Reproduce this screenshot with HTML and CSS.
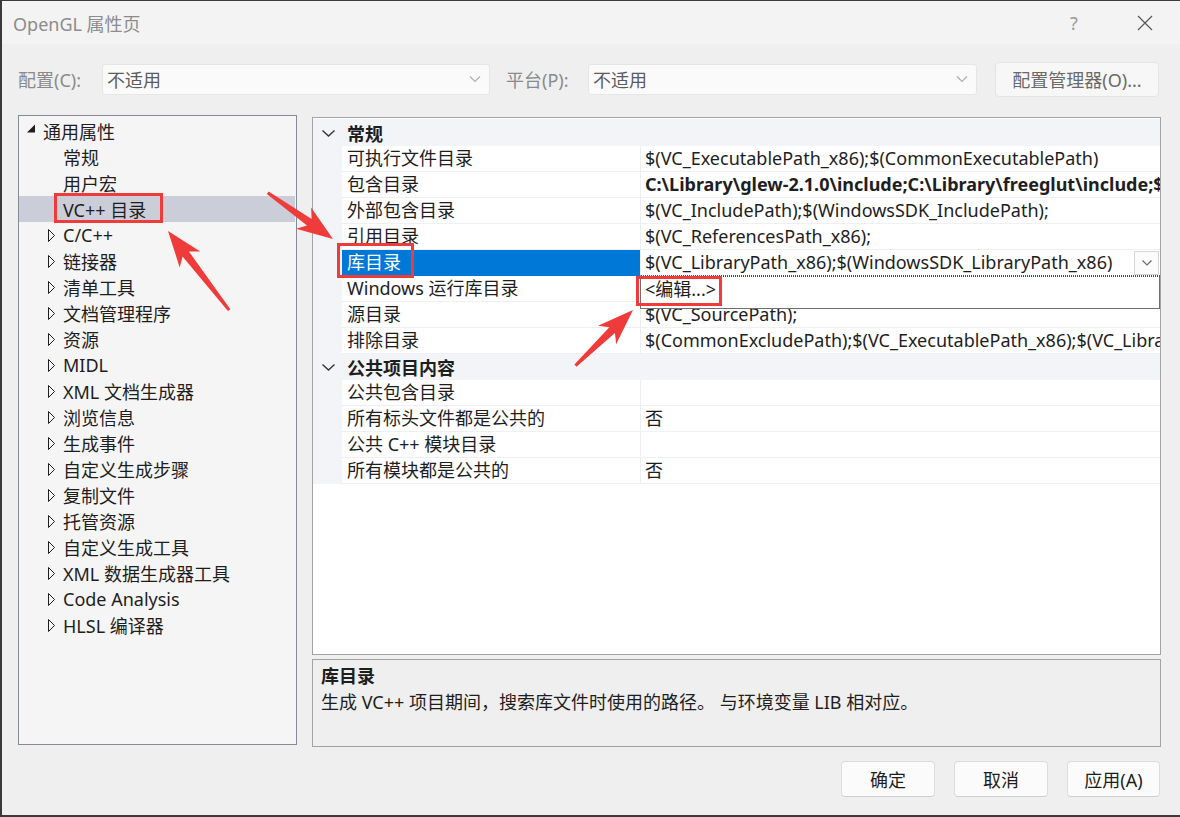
FILE: index.html
```html
<!DOCTYPE html>
<html>

<head>
    <title>OpenGL 属性页</title>
    <link rel="stylesheet" href="styles.css">
</head>

<body>
<div class="window">

    <div class="titlebar">
        <span class="title">OpenGL 属性页</span>
        <span class="help">?</span>
        <span class="close">
            <svg width="16" height="16" viewBox="0 0 16 16"><path d="M1 1L15 15M15 1L1 15" stroke="#5a5a5a" stroke-width="1.3" fill="none"/></svg>
        </span>
    </div>

    <div class="config-row">
        <span class="cfg-label">配置(C):</span>
        <div class="select sel-config">
            <span>不适用</span>
            <svg class="chev" width="12" height="8" viewBox="0 0 12 8"><path d="M1 1.5L6 6.5L11 1.5" stroke="#b0b0b0" stroke-width="1.2" fill="none"/></svg>
        </div>
        <span class="cfg-label plat">平台(P):</span>
        <div class="select sel-platform">
            <span>不适用</span>
            <svg class="chev" width="12" height="8" viewBox="0 0 12 8"><path d="M1 1.5L6 6.5L11 1.5" stroke="#b0b0b0" stroke-width="1.2" fill="none"/></svg>
        </div>
        <button class="btn cfg-mgr">配置管理器(O)...</button>
    </div>

    <div class="main">
        <div class="tree">
            <div class="node root">
                <svg class="tw" width="16" height="10" viewBox="0 0 16 10"><polygon points="8,0.5 8,8.5 0,8.5" fill="#1e1e1e"/></svg>
                <span>通用属性</span>
            </div>
            <div class="node leaf">常规</div>
            <div class="node leaf">用户宏</div>
            <div class="node leaf selected">VC++ 目录</div>
            <div class="node closed"><svg class="tw" width="15" height="13" viewBox="0 0 15 13"><polygon points="0.5,0.5 6.5,6.5 0.5,12.5" fill="none" stroke="#1e1e1e"/></svg>C/C++</div>
            <div class="node closed"><svg class="tw" width="15" height="13" viewBox="0 0 15 13"><polygon points="0.5,0.5 6.5,6.5 0.5,12.5" fill="none" stroke="#1e1e1e"/></svg>链接器</div>
            <div class="node closed"><svg class="tw" width="15" height="13" viewBox="0 0 15 13"><polygon points="0.5,0.5 6.5,6.5 0.5,12.5" fill="none" stroke="#1e1e1e"/></svg>清单工具</div>
            <div class="node closed"><svg class="tw" width="15" height="13" viewBox="0 0 15 13"><polygon points="0.5,0.5 6.5,6.5 0.5,12.5" fill="none" stroke="#1e1e1e"/></svg>文档管理程序</div>
            <div class="node closed"><svg class="tw" width="15" height="13" viewBox="0 0 15 13"><polygon points="0.5,0.5 6.5,6.5 0.5,12.5" fill="none" stroke="#1e1e1e"/></svg>资源</div>
            <div class="node closed"><svg class="tw" width="15" height="13" viewBox="0 0 15 13"><polygon points="0.5,0.5 6.5,6.5 0.5,12.5" fill="none" stroke="#1e1e1e"/></svg>MIDL</div>
            <div class="node closed"><svg class="tw" width="15" height="13" viewBox="0 0 15 13"><polygon points="0.5,0.5 6.5,6.5 0.5,12.5" fill="none" stroke="#1e1e1e"/></svg>XML 文档生成器</div>
            <div class="node closed"><svg class="tw" width="15" height="13" viewBox="0 0 15 13"><polygon points="0.5,0.5 6.5,6.5 0.5,12.5" fill="none" stroke="#1e1e1e"/></svg>浏览信息</div>
            <div class="node closed"><svg class="tw" width="15" height="13" viewBox="0 0 15 13"><polygon points="0.5,0.5 6.5,6.5 0.5,12.5" fill="none" stroke="#1e1e1e"/></svg>生成事件</div>
            <div class="node closed"><svg class="tw" width="15" height="13" viewBox="0 0 15 13"><polygon points="0.5,0.5 6.5,6.5 0.5,12.5" fill="none" stroke="#1e1e1e"/></svg>自定义生成步骤</div>
            <div class="node closed"><svg class="tw" width="15" height="13" viewBox="0 0 15 13"><polygon points="0.5,0.5 6.5,6.5 0.5,12.5" fill="none" stroke="#1e1e1e"/></svg>复制文件</div>
            <div class="node closed"><svg class="tw" width="15" height="13" viewBox="0 0 15 13"><polygon points="0.5,0.5 6.5,6.5 0.5,12.5" fill="none" stroke="#1e1e1e"/></svg>托管资源</div>
            <div class="node closed"><svg class="tw" width="15" height="13" viewBox="0 0 15 13"><polygon points="0.5,0.5 6.5,6.5 0.5,12.5" fill="none" stroke="#1e1e1e"/></svg>自定义生成工具</div>
            <div class="node closed"><svg class="tw" width="15" height="13" viewBox="0 0 15 13"><polygon points="0.5,0.5 6.5,6.5 0.5,12.5" fill="none" stroke="#1e1e1e"/></svg>XML 数据生成器工具</div>
            <div class="node closed"><svg class="tw" width="15" height="13" viewBox="0 0 15 13"><polygon points="0.5,0.5 6.5,6.5 0.5,12.5" fill="none" stroke="#1e1e1e"/></svg>Code Analysis</div>
            <div class="node closed"><svg class="tw" width="15" height="13" viewBox="0 0 15 13"><polygon points="0.5,0.5 6.5,6.5 0.5,12.5" fill="none" stroke="#1e1e1e"/></svg>HLSL 编译器</div>
        </div>

        <div class="right">
            <div class="grid">
                <div class="cat first">
                    <svg class="cat-chev" width="29" height="10" viewBox="0 0 29 10"><path d="M9.5 2.5L15.5 8L21.5 2.5" stroke="#333" stroke-width="1.4" fill="none"/></svg>
                    <span>常规</span>
                </div>
                <div class="prow"><div class="pname">可执行文件目录</div><div class="pval">$(VC_ExecutablePath_x86);$(CommonExecutablePath)</div></div>
                <div class="prow"><div class="pname">包含目录</div><div class="pval bold">C:\Library\glew-2.1.0\include;C:\Library\freeglut\include;$(VC_IncludePath);$(WindowsSDK_IncludePath);</div></div>
                <div class="prow"><div class="pname">外部包含目录</div><div class="pval">$(VC_IncludePath);$(WindowsSDK_IncludePath);</div></div>
                <div class="prow"><div class="pname">引用目录</div><div class="pval">$(VC_ReferencesPath_x86);</div></div>
                <div class="prow active">
                    <div class="pname">库目录</div>
                    <div class="pval">
                        <span class="vtext">$(VC_LibraryPath_x86);$(WindowsSDK_LibraryPath_x86)</span>
                        <span class="dd-btn"><svg width="12" height="8" viewBox="0 0 12 8"><path d="M1.5 1.5L6 6L10.5 1.5" stroke="#666" stroke-width="1.1" fill="none"/></svg></span>
                    </div>
                </div>
                <div class="prow">
                    <div class="pname">Windows 运行库目录</div>
                    <div class="pval popup-anchor">
                        <div class="edit-popup">&lt;编辑...&gt;</div>
                    </div>
                </div>
                <div class="prow"><div class="pname">源目录</div><div class="pval">$(VC_SourcePath);</div></div>
                <div class="prow"><div class="pname">排除目录</div><div class="pval">$(CommonExcludePath);$(VC_ExecutablePath_x86);$(VC_LibraryPath_x86)</div></div>
                <div class="cat">
                    <svg class="cat-chev" width="29" height="10" viewBox="0 0 29 10"><path d="M9.5 2.5L15.5 8L21.5 2.5" stroke="#333" stroke-width="1.4" fill="none"/></svg>
                    <span>公共项目内容</span>
                </div>
                <div class="prow"><div class="pname">公共包含目录</div><div class="pval"></div></div>
                <div class="prow"><div class="pname">所有标头文件都是公共的</div><div class="pval">否</div></div>
                <div class="prow"><div class="pname">公共 C++ 模块目录</div><div class="pval"></div></div>
                <div class="prow"><div class="pname">所有模块都是公共的</div><div class="pval">否</div></div>
            </div>

            <div class="desc">
                <div class="desc-title">库目录</div>
                <div class="desc-text">生成 VC++ 项目期间，搜索库文件时使用的路径。 与环境变量 LIB 相对应。</div>
            </div>
        </div>
    </div>

    <div class="footer">
        <button class="btn">确定</button>
        <button class="btn">取消</button>
        <button class="btn apply">应用(A)</button>
    </div>

    <!-- annotations drawn over the screenshot -->
    <svg class="annot" width="1180" height="817" viewBox="0 0 1180 817">
        <g fill="none" stroke="#ef3b39" stroke-width="3">
            <rect x="55.5" y="194.5" width="106" height="27"/>
            <rect x="338.5" y="244.5" width="74" height="32"/>
            <rect x="637.5" y="277.5" width="83" height="27"/>
        </g>
        <g fill="#ef3b39">
            <polygon transform="translate(168 231) rotate(-127.7)" points="0,0 -36,-13 -29,-4 -100,-1.5 -100,1.5 -29,4 -36,13"/>
            <polygon transform="translate(333 239) rotate(35.3)" points="0,0 -36,-13 -29,-4 -80,-1.5 -80,1.5 -29,4 -36,13"/>
            <polygon transform="translate(633 310) rotate(-44)" points="0,0 -36,-13 -29,-4 -80,-1.5 -80,1.5 -29,4 -36,13"/>
        </g>
    </svg>
</div>
</body>
</html>
```

FILE: styles.css
```css
html, body {
    margin: 0;
    padding: 0;
}

body {
    font-family: "Noto Sans", "Noto Sans CJK SC", sans-serif;
    font-size: 18px;
    color: #1e1e1e;
    background: #efefef;
}

.window {
    position: relative;
    width: 1180px;
    height: 817px;
    box-sizing: border-box;
    border-top: 1px solid #3a3a3a;
    border-left: 2px solid #3a3a3a;
    border-bottom: 2px solid #3a3a3a;
    background: #efefef;
    overflow: hidden;
}

.titlebar {
    height: 43px;
    display: flex;
    align-items: center;
    background: #f3f3f3;
    padding-left: 11px;
}

.title {
    flex: 1;
    color: #8c8c8c;
    font-size: 18px;
}

.help {
    color: #9a9a9a;
    font-size: 18px;
    width: 14px;
    margin-right: 53px;
}

.close {
    display: flex;
    width: 16px;
    margin-right: 27px;
}

.config-row {
    display: flex;
    align-items: center;
    height: 36px;
    margin-top: 17px;
    padding-left: 16px;
}

.cfg-label {
    width: 84px;
    color: #8a8a8a;
}

.cfg-label.plat {
    width: 82px;
}

.select {
    height: 31px;
    box-sizing: border-box;
    background: #fafafa;
    border: 1px solid #e6e6e6;
    border-radius: 3px;
    display: flex;
    align-items: center;
    padding: 0 8px 0 4px;
    color: #5c5c5c;
}

.select span {
    flex: 1;
}

.sel-config {
    width: 388px;
    margin-right: 16px;
}

.sel-platform {
    width: 389px;
    margin-right: 18px;
}

.btn {
    font-family: inherit;
    font-size: 18px;
    color: #1e1e1e;
    background: #fbfbfb;
    border: 1px solid #dcdcdc;
    border-bottom-color: #cfcfcf;
    border-radius: 4px;
    height: 36px;
    width: 94px;
    padding: 0;
}

.btn.apply {
    width: 93px;
}

.cfg-mgr {
    width: 164px;
    height: 35px;
    color: #6a6a6a;
    background: #f7f7f7;
    border-color: #e4e4e4;
}

.main {
    display: flex;
    align-items: flex-start;
    margin-top: 18px;
    padding-left: 16px;
}

.tree {
    width: 279px;
    height: 630px;
    box-sizing: border-box;
    border: 1px solid #858a94;
    background: #f5f5f5;
    padding: 2px 1px 0 0;
}

.node {
    height: 26px;
    display: flex;
    align-items: center;
    white-space: nowrap;
}

.node.root {
    padding-left: 8px;
}

.node.root .tw {
    margin-top: -4px;
}

.node.leaf {
    padding-left: 44px;
}

.node.closed {
    padding-left: 29px;
}

.node.selected {
    background: #cbcdd9;
}

.tw {
    flex: none;
}

.right {
    margin-left: 15px;
    margin-top: 2px;
    width: 849px;
    display: flex;
    flex-direction: column;
    gap: 4px;
}

.grid {
    height: 538px;
    box-sizing: border-box;
    border: 1px solid #a3a3a3;
    background: #ffffff;
    padding-top: 1px;
}

.cat {
    height: 26px;
    display: flex;
    align-items: center;
    background: #f2f4f8;
    font-weight: bold;
}

.cat.first {
    height: 27px;
}

.cat-chev {
    margin-right: 5px;
}

.prow {
    height: 26px;
    display: flex;
    padding-left: 29px;
    background: #f2f4f8;
}

.pname {
    width: 299px;
    flex: none;
    padding-left: 5px;
    background: #ffffff;
    border-right: 1px solid #eceef2;
    border-bottom: 1px solid #eef0f3;
    box-sizing: border-box;
    line-height: 25px;
    white-space: nowrap;
    overflow: hidden;
}

.pval {
    flex: 1;
    min-width: 0;
    padding-left: 4px;
    background: #ffffff;
    border-bottom: 1px solid #eef0f3;
    box-sizing: border-box;
    line-height: 25px;
    white-space: nowrap;
    overflow: hidden;
}

.pval.bold {
    font-weight: bold;
}

.prow.active .pname {
    background: #0078d7;
    color: #ffffff;
    border-bottom-color: #0078d7;
}

.prow.active .pval {
    display: flex;
    align-items: center;
    border-bottom: 1px dotted #555;
}

.vtext {
    flex: 1;
    overflow: hidden;
}

.dd-btn {
    width: 23px;
    height: 22px;
    border: 1px solid #d6d6d6;
    background: #fbfbfb;
    display: flex;
    align-items: center;
    justify-content: center;
    margin-right: 1px;
}

.popup-anchor {
    position: relative;
    overflow: visible;
}

.edit-popup {
    position: absolute;
    left: -1px;
    top: 0;
    right: 0;
    height: 33px;
    box-sizing: border-box;
    background: #ffffff;
    border: 1px solid #6f6f6f;
    border-top: 1px dotted #444;
    padding-left: 4px;
    line-height: 25px;
    z-index: 2;
}

.desc {
    height: 88px;
    box-sizing: border-box;
    border: 1px solid #a3a3a3;
    background: #efefef;
    padding: 3px 0 0 8px;
}

.desc-title {
    font-weight: bold;
    line-height: 26px;
}

.desc-text {
    line-height: 26px;
}

.footer {
    display: flex;
    justify-content: flex-end;
    gap: 19px;
    margin-top: 14px;
    padding-right: 20px;
}

.annot {
    position: absolute;
    left: -2px;
    top: -1px;
    pointer-events: none;
    z-index: 5;
}
```
